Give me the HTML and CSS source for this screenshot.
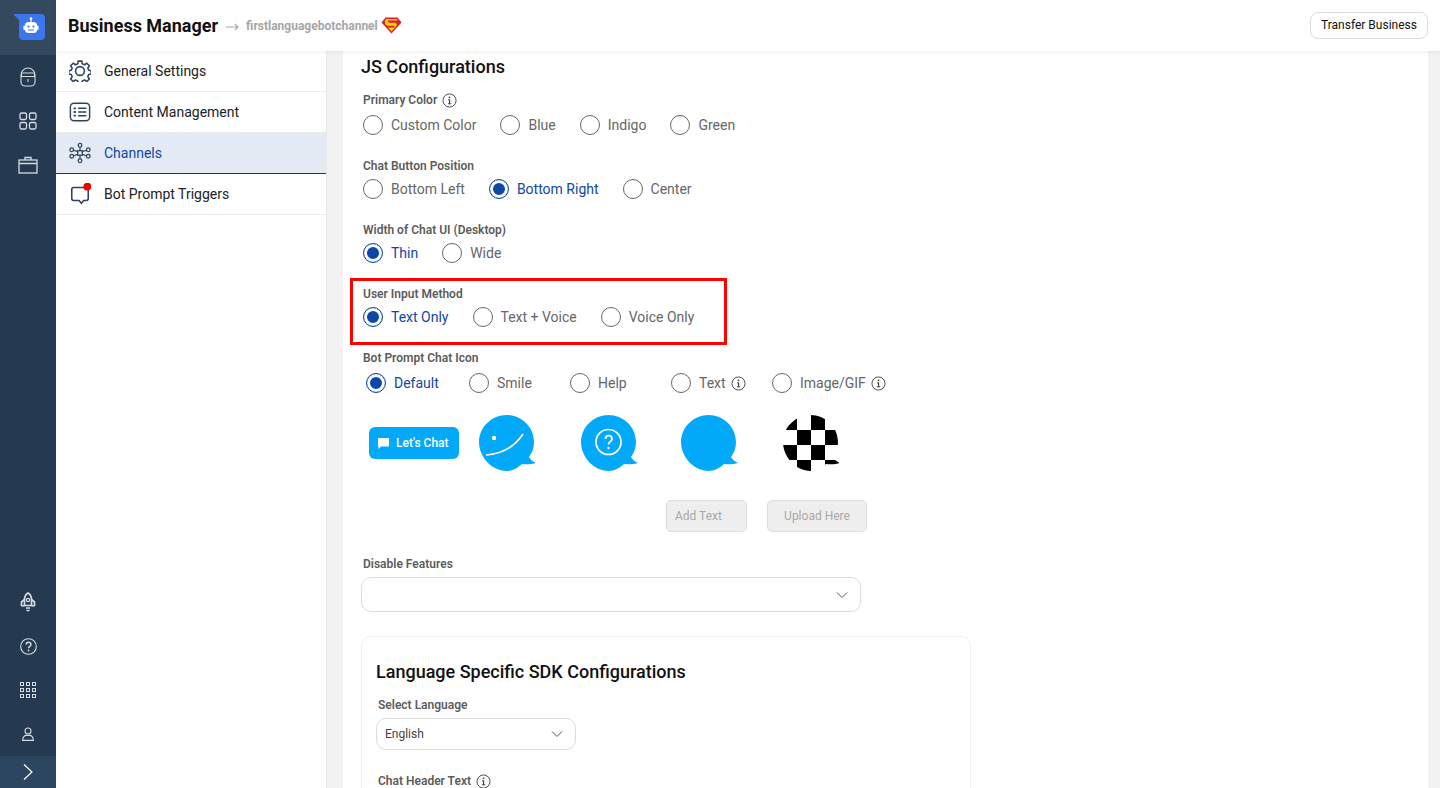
FILE: index.html
```html
<!DOCTYPE html>
<html>
    <head>
        <meta charset="utf-8">
        <title>Business Manager</title>
        <link rel="stylesheet" href="styles.css">
    </head>

    <body>
        <svg class="defs" width="0" height="0">
            <defs>
                <symbol id="info" viewBox="0 0 16 16">
                    <circle cx="8" cy="8" r="7" fill="none" stroke="#444" stroke-width="1"/>
                    <rect x="7.400" y="6.800" width="1.300" height="5" fill="#444"/>
                    <rect x="6.400" y="6.800" width="1.400" height="1" fill="#444"/>
                    <rect x="6.300" y="11" width="3.500" height="1" fill="#444"/>
                    <circle cx="8" cy="4.600" r="1" fill="#444"/>
                </symbol>
                <symbol id="bubble" viewBox="0 0 58 58">
                    <path d="M27.500 1C42 1 55 12.500 55 28c0 6-2 11-5 15 1.500 2.500 3.500 4.500 7 6-4 1.300-9 1.500-14 1-4.500 4-9.500 7-15.500 7C13 57 0 43 0 28S13 1 27.500 1z"/>
                </symbol>
                <symbol id="chevron" viewBox="0 0 12 8">
                    <path d="M1 1.500l5 5 5-5" fill="none" stroke="#555" stroke-width="1"/>
                </symbol>
                <pattern id="checks" width="28" height="30" patternUnits="userSpaceOnUse" x="0" y="1">
                    <rect width="28" height="30" fill="#fff"/>
                    <rect width="14" height="15" fill="#000"/>
                    <rect x="14" y="15" width="14" height="15" fill="#000"/>
                </pattern>
            </defs>
        </svg>

        <aside class="rail">
            <div class="rail-logo">
                <svg width="32" height="26" viewBox="0 0 32 26">
                    <path d="M0 0h28a4 4 0 0 1 4 4v18a4 4 0 0 1-4 4H10a4 4 0 0 1-4-4V6z" fill="#3b76ee"/>
                    <circle cx="18" cy="4.500" r="1.300" fill="#fff"/>
                    <rect x="17.400" y="5" width="1.200" height="3" fill="#fff"/>
                    <rect x="12" y="8" width="12" height="11" rx="3.500" fill="#fff"/>
                    <rect x="10.400" y="11.500" width="2" height="4.500" rx="1" fill="#fff"/>
                    <rect x="23.600" y="11.500" width="2" height="4.500" rx="1" fill="#fff"/>
                    <circle cx="15.500" cy="12.500" r="1.100" fill="#3b76ee"/>
                    <circle cx="20.500" cy="12.500" r="1.100" fill="#3b76ee"/>
                    <rect x="15" y="15.500" width="6" height="1" fill="#3b76ee"/>
                </svg>
            </div>
            <div class="rail-item">
                <svg width="16" height="20" viewBox="0 0 16 20" fill="none" stroke="#d5dbe1" stroke-width="1.100">
                    <path d="M1 8a7 7 0 0 1 14 0v7a4 4 0 0 1-4 4H5a4 4 0 0 1-4-4z"/>
                    <path d="M1.500 6h13v3.500h-13z"/>
                    <path d="M8 12v3"/>
                </svg>
            </div>
            <div class="rail-item">
                <svg width="18" height="18" viewBox="0 0 18 18" fill="none" stroke="#d5dbe1" stroke-width="1.300">
                    <rect x="1" y="1" width="6.500" height="6.500" rx="1.500"/>
                    <rect x="10.500" y="1" width="6.500" height="6.500" rx="1.500"/>
                    <rect x="1" y="10.500" width="6.500" height="6.500" rx="1.500"/>
                    <rect x="10.500" y="10.500" width="6.500" height="6.500" rx="1.500"/>
                </svg>
            </div>
            <div class="rail-item">
                <svg width="20" height="18" viewBox="0 0 20 18" fill="none" stroke="#d5dbe1" stroke-width="1.300">
                    <rect x="1" y="4" width="18" height="13"/>
                    <path d="M1 7.500h18M7 4V1.500h6V4"/>
                </svg>
            </div>

            <div class="rail-item rail-push">
                <svg width="16" height="20" viewBox="0 0 16 20" fill="none" stroke="#d5dbe1" stroke-width="1.700">
                    <path d="M8 1c2.500 1.500 3.500 4 3.500 6.500v6h-7v-6C4.500 5 5.500 2.500 8 1z"/>
                    <path d="M4.500 7.500L1.500 10v3.500l3 .5M11.500 7.500l3 2.500v3.500l-3 .5"/>
                    <circle cx="8" cy="8" r="1.600" stroke-width="1.200"/>
                    <path d="M6 16h4M6.500 18.500h3"/>
                </svg>
            </div>
            <div class="rail-item">
                <svg width="17" height="17" viewBox="0 0 17 17" fill="none" stroke="#d5dbe1" stroke-width="1.100">
                    <circle cx="8.500" cy="8.500" r="7.800"/>
                    <path d="M6.200 6.600c0-3 4.800-3 4.800-.2 0 2-2.500 1.800-2.500 3.800" stroke-width="1.500"/>
                    <circle cx="8.500" cy="12.500" r=".9" fill="#d5dbe1" stroke="none"/>
                </svg>
            </div>
            <div class="rail-item">
                <svg width="16" height="16" viewBox="0 0 16 16" fill="none" stroke="#d5dbe1">
                    <rect x=".5" y=".5" width="3" height="3"/><rect x="6.500" y=".5" width="3" height="3"/><rect x="12.500" y=".5" width="3" height="3"/>
                    <rect x=".5" y="6.500" width="3" height="3"/><rect x="6.500" y="6.500" width="3" height="3"/><rect x="12.500" y="6.500" width="3" height="3"/>
                    <rect x=".5" y="12.500" width="3" height="3"/><rect x="6.500" y="12.500" width="3" height="3"/><rect x="12.500" y="12.500" width="3" height="3"/>
                </svg>
            </div>
            <div class="rail-item">
                <svg width="12" height="14" viewBox="0 0 12 14" fill="none" stroke="#d5dbe1" stroke-width="1.100">
                    <circle cx="6" cy="4" r="3"/>
                    <path d="M.6 13.400c0-3 2-4.800 3-5h4.800c1 .2 3 2 3 5z"/>
                </svg>
            </div>
            <div class="rail-toggle">
                <svg width="10" height="16" viewBox="0 0 10 16" fill="none" stroke="#fff" stroke-width="1.200">
                    <path d="M1 .5L9 8l-8 7.500"/>
                </svg>
            </div>
        </aside>

        <header class="topbar">
            <h1>Business Manager</h1>
            <svg class="crumb-arrow" width="13" height="8" viewBox="0 0 13 8" fill="none" stroke="#aaa" stroke-width="1.200">
                <path d="M0 4h12M9 1l3 3-3 3"/>
            </svg>
            <span class="crumb">firstlanguagebotchannel</span>
            <svg width="21" height="17" viewBox="0 0 21 17">
                <path d="M4.500 .5h12l4 5-10 11-10-11z" fill="#e31d1d"/>
                <path d="M5 2h10.500l1.500 1.500H8c-2 0-1.500 2 .5 2.200h5c2.500.3 3 2 1.500 3.800l-4.500 5-3.500-3.900h6c1-.8.500-1.800-.5-1.900H6.500C3.500 8 3.200 4.500 5 2z" fill="#f6d512"/>
            </svg>
            <button class="transfer">Transfer Business</button>
        </header>

        <nav class="menu">
            <a class="menu-item">
                <svg width="22" height="22" viewBox="0 0 24 24" fill="none" stroke="#2f435b" stroke-width="1.700">
                    <path d="M10 1.200h4l.5 3 2.400 1 2.500-1.700 2.800 2.800-1.700 2.500 1 2.400 2.800.5v3.500l-2.800.6-1 2.400 1.700 2.500-2.800 2.800-2.500-1.700-2.400 1-.5 2.900h-4l-.5-2.900-2.400-1-2.500 1.700-2.800-2.800 1.700-2.500-1-2.400-2.800-.6v-3.500l2.800-.5 1-2.400-1.700-2.500 2.800-2.800 2.500 1.700 2.400-1z" stroke-linejoin="round"/>
                    <circle cx="12" cy="12" r="4.800"/>
                </svg>
                General Settings
            </a>
            <a class="menu-item">
                <svg width="22" height="22" viewBox="0 0 24 24" fill="none" stroke="#2f435b" stroke-width="1.600">
                    <rect x="1.500" y="2.500" width="21" height="19" rx="4"/>
                    <path d="M10 8h9M10 12h9M10 16h9" stroke-width="1.700"/>
                    <path d="M5 8h2.500M5 12h2.500M5 16h2.500" stroke-width="2"/>
                </svg>
                Content Management
            </a>
            <a class="menu-item is-active">
                <svg width="22" height="22" viewBox="0 0 24 24" fill="none" stroke="#2f435b" stroke-width="1.400">
                    <rect x="9.500" y="9.500" width="5" height="5"/>
                    <circle cx="12" cy="3.500" r="2"/><circle cx="12" cy="20.500" r="2"/>
                    <circle cx="3" cy="8.500" r="2"/><circle cx="21" cy="8.500" r="2"/>
                    <circle cx="3" cy="15.500" r="2"/><circle cx="21" cy="15.500" r="2"/>
                    <path d="M12 5.500v4M12 14.500v4M5 9l4.500 1.500M19 9l-4.500 1.500M5 15l4.500-1.500M19 15l-4.500-1.500"/>
                </svg>
                Channels
            </a>
            <a class="menu-item">
                <svg width="22" height="22" viewBox="0 0 24 24" fill="none">
                    <path d="M5 5h14a2 2 0 0 1 2 2v10a2 2 0 0 1-2 2h-3l-2.500 3-2.500-3H5a2 2 0 0 1-2-2V7a2 2 0 0 1 2-2z" stroke="#2f435b" stroke-width="1.700"/>
                    <circle cx="20" cy="4" r="4.300" fill="#f00000"/>
                </svg>
                Bot Prompt Triggers
            </a>
        </nav>

        <main class="page">
            <section class="panel">
                <h2>JS Configurations</h2>

                <div class="group group-first">
                    <div class="label">Primary Color <svg class="info"><use href="#info"/></svg></div>
                    <div class="options">
                        <label class="radio"><input type="radio" name="color">Custom Color</label>
                        <label class="radio"><input type="radio" name="color">Blue</label>
                        <label class="radio"><input type="radio" name="color">Indigo</label>
                        <label class="radio"><input type="radio" name="color">Green</label>
                    </div>
                </div>

                <div class="group">
                    <div class="label">Chat Button Position</div>
                    <div class="options">
                        <label class="radio"><input type="radio" name="pos">Bottom Left</label>
                        <label class="radio"><input type="radio" name="pos" checked>Bottom Right</label>
                        <label class="radio"><input type="radio" name="pos">Center</label>
                    </div>
                </div>

                <div class="group">
                    <div class="label">Width of Chat UI (Desktop)</div>
                    <div class="options">
                        <label class="radio"><input type="radio" name="width" checked>Thin</label>
                        <label class="radio"><input type="radio" name="width">Wide</label>
                    </div>
                </div>

                <div class="group highlighted">
                    <div class="label">User Input Method</div>
                    <div class="options">
                        <label class="radio"><input type="radio" name="input" checked>Text Only</label>
                        <label class="radio"><input type="radio" name="input">Text + Voice</label>
                        <label class="radio"><input type="radio" name="input">Voice Only</label>
                    </div>
                </div>

                <div class="group group-icons">
                    <div class="label">Bot Prompt Chat Icon</div>
                    <div class="icon-options">
                        <label class="radio"><input type="radio" name="icon" checked>Default</label>
                        <label class="radio"><input type="radio" name="icon">Smile</label>
                        <label class="radio"><input type="radio" name="icon">Help</label>
                        <label class="radio"><input type="radio" name="icon">Text <svg class="info"><use href="#info"/></svg></label>
                        <label class="radio"><input type="radio" name="icon">Image/GIF <svg class="info"><use href="#info"/></svg></label>
                    </div>
                    <div class="previews">
                        <div class="lets-chat">
                            <svg width="13" height="13" viewBox="0 0 13 13"><path d="M1 1h11v8.500H4L1.500 12V9.500H1z" fill="#fff"/></svg>
                            Let's Chat
                        </div>
                        <svg class="bubble" viewBox="0 0 58 58">
                            <use href="#bubble"/>
                            <circle cx="15" cy="24" r="2.200" fill="#fff"/>
                            <path d="M7 41c17-1 29-9 37-21" fill="none" stroke="#fff" stroke-width="1.700"/>
                        </svg>
                        <svg class="bubble" viewBox="0 0 58 58">
                            <use href="#bubble"/>
                            <circle cx="27.500" cy="28" r="12.500" fill="none" stroke="#fff" stroke-width="1.700"/>
                            <path d="M24.500 25c0-4.500 6.500-4.500 6.500 0 0 2.800-3.500 2.500-3.500 5.500" fill="none" stroke="#fff" stroke-width="1.800"/>
                            <circle cx="27.500" cy="34" r="1.200" fill="#fff"/>
                        </svg>
                        <svg class="bubble" viewBox="0 0 58 58"><use href="#bubble"/></svg>
                        <svg class="bubble bubble-checks" viewBox="0 0 58 58"><use href="#bubble"/></svg>
                    </div>
                    <div class="preview-actions">
                        <button class="ghost ghost-text" disabled>Add Text</button>
                        <button class="ghost ghost-upload" disabled>Upload Here</button>
                    </div>
                </div>

                <div class="field">
                    <div class="label">Disable Features</div>
                    <div class="select select-wide"><svg class="chevron"><use href="#chevron"/></svg></div>
                </div>

                <section class="card">
                    <h2>Language Specific SDK Configurations</h2>
                    <div class="label label-card">Select Language</div>
                    <div class="select select-small">English <svg class="chevron"><use href="#chevron"/></svg></div>
                    <div class="label label-card label-last">Chat Header Text <svg class="info"><use href="#info"/></svg></div>
                </section>
            </section>
        </main>
    </body>
</html>
```

FILE: styles.css
```css
*, *::after {
    box-sizing: border-box;
}

html, body {
    height: 100%;
    margin: 0;
    overflow: hidden;
}

body {
    display: grid;
    grid-template-columns: 56px 271px 1fr;
    grid-template-rows: 51px 1fr;
    font-family: Roboto, sans-serif;
    color: #222;
    background: #f2f2f2;
}

.defs {
    position: absolute;
}

/* left rail */
.rail {
    grid-row: 1 / 3;
    display: flex;
    flex-direction: column;
    background: #253a50;
}

.rail-logo {
    height: 55px;
    flex: none;
    padding: 14px 0 0 13px;
    background: #35495e;
}

.rail-item {
    height: 44px;
    flex: none;
    display: flex;
    align-items: center;
    justify-content: center;
}

.rail-push {
    margin-top: auto;
}

.rail-toggle {
    height: 32px;
    flex: none;
    display: flex;
    align-items: center;
    justify-content: center;
    background: #2c4661;
}

/* top bar */
.topbar {
    grid-column: 2 / 4;
    position: relative;
    z-index: 2;
    display: flex;
    align-items: center;
    padding: 0 12px;
    background: #fff;
    box-shadow: 0 1px 4px rgba(0, 0, 0, .08);
}

.topbar h1 {
    margin: 0;
    font-size: 18px;
    font-weight: 700;
    color: #111;
}

.crumb-arrow {
    margin: 2px 7px 0 8px;
}

.crumb {
    margin-right: 3px;
    font-size: 12px;
    font-weight: 700;
    color: #a6a6a6;
}

.transfer {
    margin-left: auto;
    height: 27px;
    width: 118px;
    padding: 0 0 2px;
    font-family: Roboto, sans-serif;
    font-size: 12px;
    color: #111;
    background: #fff;
    border: 1px solid #ddd;
    border-radius: 8px;
}

/* second column menu */
.menu {
    background: #fff;
    border-right: 1px solid #e8e8e8;
}

.menu-item {
    height: 41px;
    display: flex;
    align-items: center;
    gap: 13px;
    padding-left: 13px;
    font-size: 14px;
    color: #222;
    border-bottom: 1px solid #ececec;
}

.menu-item.is-active {
    color: #0d47a8;
    background: #e4eaf3;
    border-bottom-color: #12387c;
}

/* main panel */
.page {
    overflow: hidden;
    padding: 0 12px 0 16px;
}

.panel {
    height: 100%;
    padding: 5px 18px 0 18px;
    background: #fff;
}

h2 {
    margin: 0;
    font-size: 18px;
    line-height: 22px;
    font-weight: 500;
    color: #111;
}

.group {
    padding: 11px 0 0 2px;
    height: 64px;
}

.group-first {
    height: 69px;
    padding-top: 14px;
}

.group-first .options {
    margin-top: 5px;
}

.label {
    display: flex;
    align-items: center;
    gap: 5px;
    height: 16px;
    font-size: 12px;
    font-weight: 600;
    color: #5c5c5c;
}

.options {
    display: flex;
    gap: 24px;
    margin-top: 3px;
}

.radio {
    display: flex;
    align-items: center;
    height: 24px;
    font-size: 14px;
    color: #666;
    white-space: nowrap;
}

.radio input {
    appearance: none;
    flex: none;
    width: 20px;
    height: 20px;
    margin: 0 8px 0 0;
    border: 1px solid #666;
    border-radius: 50%;
    background: #fff;
}

.radio input:checked {
    border-color: #0d47a8;
    box-shadow: inset 0 0 0 3px #fff, inset 0 0 0 10px #0d47a8;
}

.radio:has(input:checked) {
    color: #0d47a8;
}

.info {
    flex: none;
    width: 15px;
    height: 15px;
}

.radio .info {
    margin-left: 5px;
}

.highlighted {
    position: relative;
}

.highlighted::after {
    content: "";
    position: absolute;
    left: -11px;
    top: 3px;
    width: 377px;
    height: 67px;
    border: 3px solid #f00;
}

.group-icons {
    height: auto;
}

.icon-options {
    display: grid;
    grid-template-columns: 103px repeat(4, 101px);
    margin: 5px 0 0 3px;
}

.previews {
    display: flex;
    margin-top: 19px;
    height: 57px;
}

.lets-chat {
    display: flex;
    align-items: center;
    gap: 6px;
    width: 90px;
    height: 32px;
    margin: 13px 20px 0 6px;
    padding-left: 8px;
    font-size: 12px;
    font-weight: 500;
    color: #fff;
    background: #03a9f9;
    border-radius: 6px;
}

.bubble {
    width: 58px;
    height: 58px;
    margin-right: 44px;
    fill: #03a9f9;
}

.bubble:nth-child(3) {
    margin-right: 42px;
}

.bubble-checks {
    fill: url(#checks);
}

.preview-actions {
    display: flex;
    gap: 20px;
    margin: 29px 0 0 303px;
}

.ghost {
    height: 32px;
    padding: 0;
    font-family: Roboto, sans-serif;
    font-size: 12px;
    color: #a8a8a8;
    background: #eee;
    border: 1px solid #ddd;
    border-radius: 5px;
}

.ghost-text {
    width: 81px;
    padding-left: 8px;
    text-align: left;
}

.ghost-upload {
    width: 100px;
}

.field {
    margin-top: 24px;
}

.field .label {
    margin-left: 2px;
}

.select {
    display: flex;
    align-items: center;
    justify-content: space-between;
    background: #fff;
    border: 1px solid #ddd;
    border-radius: 10px;
    font-size: 12px;
    color: #444;
}

.select-wide {
    justify-content: flex-end;
    width: 500px;
    height: 35px;
    margin-top: 5px;
    padding: 0 12px;
}

.select-small {
    width: 200px;
    height: 32px;
    padding: 0 12px 0 8px;
}

.chevron {
    width: 12px;
    height: 8px;
}

.card {
    width: 610px;
    height: 300px;
    margin-top: 24px;
    padding: 24px 14px 0 14px;
    border: 1px solid #efefef;
    border-radius: 10px;
}

.label-card {
    margin: 14px 0 5px 2px;
}

.label-last {
    margin-top: 23px;
}
```
